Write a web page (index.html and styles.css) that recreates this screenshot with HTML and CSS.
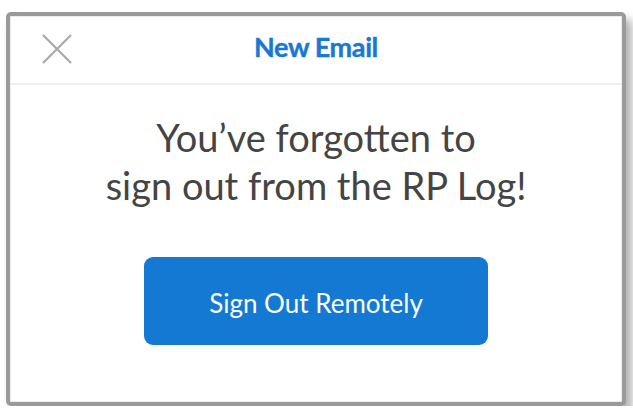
FILE: index.html
```html
<!DOCTYPE html>
<html lang="en">
<head>
<meta charset="utf-8">
<title>New Email</title>
<link rel="stylesheet" href="styles.css">
</head>
<body>
  <div class="dialog">
    <header class="dialog-header">
      <div class="close">
        <svg width="30" height="30" viewBox="0 0 30 30" aria-hidden="true">
          <path d="M1 1 L29 29 M29 1 L1 29" stroke="#a9a9a9" stroke-width="2.2" fill="none"/>
        </svg>
      </div>
      <h1 class="title">New Email</h1>
      <div class="spacer"></div>
    </header>
    <main class="dialog-body">
      <p class="message">You’ve forgotten to<br>sign out from the RP Log!</p>
      <button class="action">Sign Out Remotely</button>
    </main>
  </div>
</body>
</html>
```

FILE: styles.css
```css
html, body {
  margin: 0;
  padding: 0;
  background: #ffffff;
}

body {
  padding: 12px 0 0 6px;
  font-family: "Lato", "Open Sans", sans-serif;
}

.dialog {
  box-sizing: border-box;
  width: 620px;
  height: 394px;
  border: 4px solid #9a9a9a;
  border-radius: 5px;
  background: #ffffff;
  box-shadow: inset 0 0 0 1px #ececec, 6px 7px 8px rgba(0, 0, 0, 0.3);
  display: flex;
  flex-direction: column;
}

.dialog-header {
  box-sizing: border-box;
  height: 69px;
  padding: 0 0 4px 0;
  border-bottom: 2px solid #eeeeee;
  display: grid;
  grid-template-columns: 1fr auto 1fr;
  align-items: center;
}

.close {
  padding-left: 32px;
  display: flex;
  align-items: center;
  padding-top: 3px;
}

.close svg {
  display: block;
}

.title {
  margin: 0;
  font-size: 27px;
  font-weight: 700;
  color: #1a78d4;
  line-height: 1.2;
  letter-spacing: -0.4px;
  -webkit-text-stroke: 0.4px #1a78d4;
}

.dialog-body {
  display: flex;
  flex-direction: column;
  align-items: center;
  padding-top: 28px;
}

.message {
  margin: 0;
  font-size: 38px;
  line-height: 48px;
  color: #444444;
  text-align: center;
}

.action {
  margin-top: 48px;
  width: 344px;
  height: 88px;
  border: none;
  border-radius: 9px;
  background: #1479d3;
  color: #ffffff;
  font-family: "Lato", "Open Sans", sans-serif;
  font-size: 26px;
  padding: 3px 0 0 0;
}
```
